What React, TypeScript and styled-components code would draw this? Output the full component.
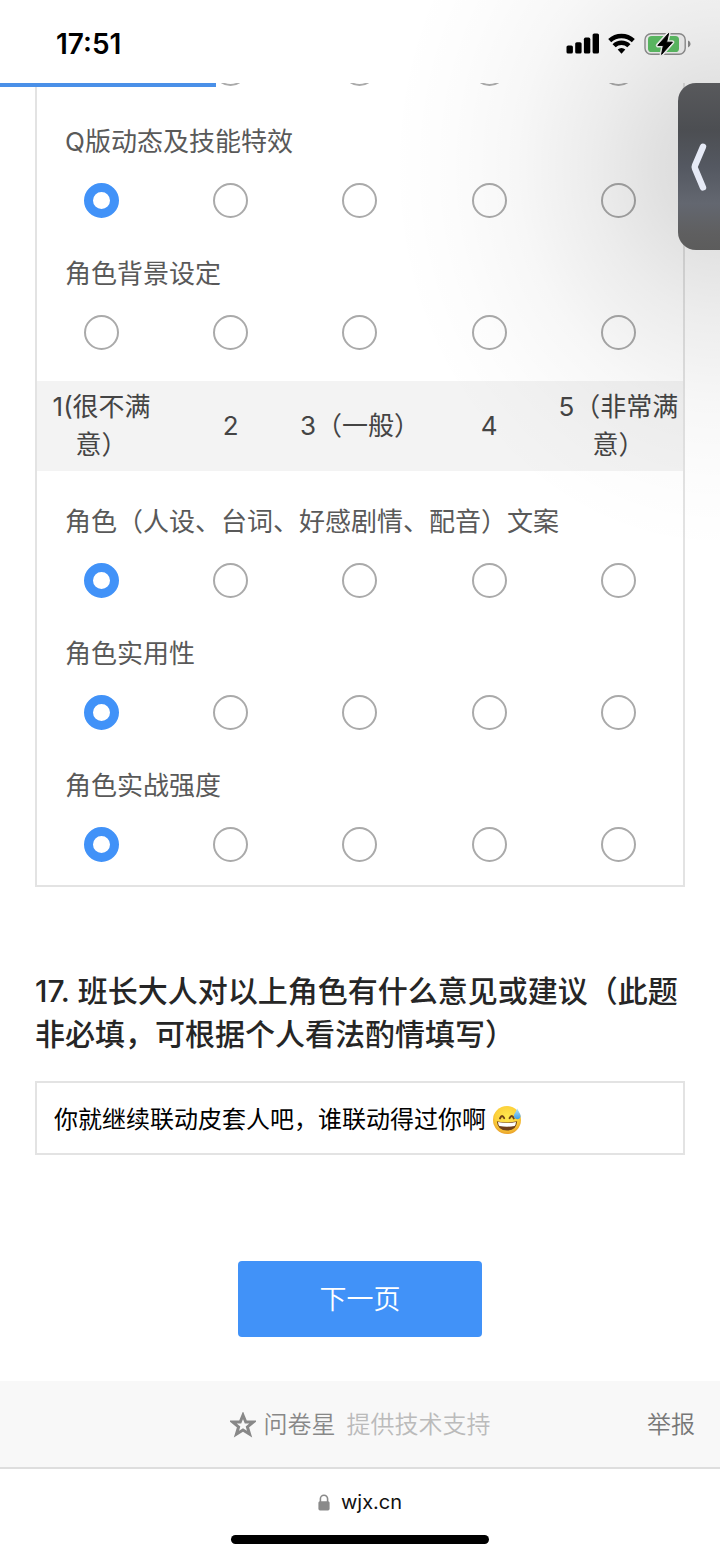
import React, { useState } from 'react';
import styled, { createGlobalStyle } from 'styled-components';

const GlobalStyle = createGlobalStyle`
  *, *::before, *::after { box-sizing: border-box; }
  body {
    margin: 0;
    background: #fff;
    color: #595959;
    font-family: Inter, "Noto Sans CJK SC", sans-serif;
    font-size: 26px;
    line-height: 38px;
  }
`;

const Screen = styled.div`
  position: relative;
  display: flex;
  flex-direction: column;
  min-height: 100vh;
  overflow: hidden;
`;

const StatusBar = styled.header`
  display: flex;
  align-items: center;
  justify-content: space-between;
  height: 83px;
  padding: 4px 29px 0 56px;
`;

const Clock = styled.time`
  color: #000;
  font-size: 28px;
  font-weight: 600;
`;

const StatusIcons = styled.div`
  display: flex;
  align-items: center;
  gap: 9px;
`;

const Survey = styled.main`
  position: relative;
  flex: 1;
  padding: 0 35px 44px;
`;

const Progress = styled.div<{ $percent: number }>`
  position: absolute;
  top: 0;
  left: 0;
  width: ${(p) => p.$percent}%;
  height: 4px;
  background: #4a90e8;
`;

const Matrix = styled.section`
  border: 2px solid #e3e3e3;
  border-top: 0;
`;

const RowGroup = styled.div<{ $first?: boolean; $last?: boolean }>`
  display: flex;
  flex-direction: column;
  gap: 36px;
  padding: ${(p) => (p.$first ? 0 : 31)}px 0 ${(p) => (p.$last ? 23 : 31)}px;
`;

const Row = styled.div`
  display: flex;
  flex-direction: column;
  gap: 21px;
`;

const RowLabel = styled.div`
  padding: 0 28px;
  line-height: 40px;
`;

const Columns = styled.div`
  display: grid;
  grid-template-columns: repeat(5, 1fr);
  justify-items: center;
`;

const ScrolledRow = styled(Columns)`
  height: 3px;
  align-content: end;
  overflow: hidden;
`;

const ScaleHeader = styled(Columns)`
  align-items: center;
  padding: 7px 0;
  background: #f3f3f3;
  color: #444;
  text-align: center;
`;

const Radio = styled.input`
  appearance: none;
  width: 35px;
  height: 35px;
  margin: 0;
  border: 2px solid #aaa;
  border-radius: 50%;

  &:checked {
    border: 9px solid #4192f8;
  }
`;

const Question = styled.label`
  display: block;
  margin: 83px 0 25px;
  color: #262626;
  font-size: 30px;
  font-weight: 500;
  line-height: 43px;
`;

const AnswerBox = styled.div`
  display: flex;
  align-items: center;
  gap: 4px;
  height: 74px;
  padding: 4px 17px 0;
  border: 2px solid #e3e3e3;
`;

const AnswerInput = styled.input`
  width: 434px;
  padding: 0;
  border: 0;
  outline: 0;
  background: transparent;
  color: #000;
  font-family: inherit;
  font-size: 24px;
  line-height: 38px;
`;

const NextButton = styled.button`
  display: block;
  width: 244px;
  height: 76px;
  margin: 106px auto 0;
  padding: 0 0 4px;
  border: 0;
  border-radius: 4px;
  background: #4192f8;
  color: #fff;
  font-family: inherit;
  font-size: 27px;
  font-weight: 350;
`;

const Footer = styled.footer`
  display: grid;
  grid-template-columns: 1fr auto 1fr;
  align-items: center;
  height: 88px;
  padding: 2px 25px 0;
  border-bottom: 2px solid #dedede;
  background: #f8f8f8;
  font-size: 24px;
  font-weight: 350;
`;

const Support = styled.div`
  display: flex;
  grid-column: 2;
  align-items: center;
  gap: 11px;
  color: #bbb;
`;

const Brand = styled.a`
  display: flex;
  align-items: center;
  gap: 8px;
  color: #888;
  text-decoration: none;
`;

const Report = styled.a`
  justify-self: end;
  color: #777;
  text-decoration: none;
`;

const AddressBar = styled.div`
  display: flex;
  flex-direction: column;
  align-items: center;
  gap: 14px;
  height: 89px;
  padding-top: 14px;
`;

const Address = styled.div`
  display: flex;
  align-items: center;
  gap: 11px;
  color: #111;
  font-size: 20px;
`;

const HomeIndicator = styled.div`
  width: 258px;
  height: 9px;
  border-radius: 5px;
  background: #000;
`;

const Shade = styled.div`
  position: absolute;
  top: 0;
  right: 0;
  width: 340px;
  height: 560px;
  background: radial-gradient(
    330px 385px at 100% 167px,
    rgba(0, 0, 0, 0.15) 0%,
    rgba(0, 0, 0, 0.12) 18%,
    rgba(0, 0, 0, 0.075) 38%,
    rgba(0, 0, 0, 0.03) 62%,
    rgba(0, 0, 0, 0.01) 82%,
    rgba(0, 0, 0, 0) 100%
  );
  pointer-events: none;
`;

const SideTab = styled.button`
  position: absolute;
  top: 83px;
  right: 0;
  display: flex;
  align-items: center;
  width: 42px;
  height: 167px;
  padding: 0 0 0 12px;
  border: 0;
  border-radius: 18px 0 0 18px;
  background: linear-gradient(#58595c 0%, #4c4e52 28%, #545861 50%, #636770 72%, #5f5f60 90%, #5c5c5c 100%);
`;

const SignalIcon = () => (
  <svg width="33" height="21" viewBox="0 0 33 21" aria-hidden="true">
    <rect x="0.5" y="12.5" width="6.4" height="8" rx="1.6" />
    <rect x="9.2" y="9.2" width="6.4" height="11.3" rx="1.6" />
    <rect x="17.9" y="4.6" width="6.4" height="15.9" rx="1.6" />
    <rect x="26.6" y="0.5" width="6.4" height="20" rx="1.6" />
  </svg>
);

const WifiIcon = () => (
  <svg width="27" height="21" viewBox="0 0 27 21" aria-hidden="true">
    <g fill="none" stroke="#000" strokeWidth="4.4">
      <path d="M1.7 7.6A17.4 17.4 0 0 1 25.3 7.6" />
      <path d="M6.1 12.8A10.4 10.4 0 0 1 20.9 12.8" />
    </g>
    <path d="M9.7 16.6A5.2 5.2 0 0 1 17.3 16.6L13.5 20.8Z" />
  </svg>
);

const BatteryIcon = () => (
  <svg width="47" height="26" viewBox="0 0 47 26" aria-hidden="true">
    <rect x="1" y="2.7" width="40.2" height="20.6" rx="6" fill="#f7f7f7" stroke="#929292" strokeWidth="1.4" />
    <rect x="4" y="5" width="31" height="16" rx="3.6" fill="#5fc267" />
    <path d="M44 9.6Q46.6 10.6 46.6 13T44 16.4Z" fill="#8c8c8c" />
    <path
      d="M24.6 2.4L13.8 14.4H19.4L17.6 23.4L28.4 11.2H22.6Z"
      stroke="#f7f7f7"
      strokeWidth="4"
      strokeLinejoin="round"
    />
    <path d="M24.6 2.4L13.8 14.4H19.4L17.6 23.4L28.4 11.2H22.6Z" stroke="#000" strokeLinejoin="round" />
  </svg>
);

const ChevronIcon = () => (
  <svg width="18" height="50" viewBox="0 0 18 50" aria-hidden="true">
    <path
      d="M13 4.8L5 23.6Q4.4 25 5 26.4L13 45.4"
      fill="none"
      stroke="#e6eaf6"
      strokeWidth="6.4"
      strokeLinecap="round"
      strokeLinejoin="round"
    />
  </svg>
);

const StarIcon = () => (
  <svg width="26" height="26" viewBox="0 0 26 26" aria-hidden="true">
    <path
      d="M13 3.2L15.8 10.1H23.2L17.4 14.9L19.6 22.2L13 18.1L6.4 22.2L8.6 14.9L2.8 10.1H10.2Z"
      fill="none"
      stroke="#888"
      strokeWidth="3"
    />
  </svg>
);

const LockIcon = () => (
  <svg width="12" height="17" viewBox="0 0 12 17" aria-hidden="true">
    <path d="M2.4 8V4.8A3.6 3.6 0 0 1 9.6 4.8V8" fill="none" stroke="#8a8a8a" strokeWidth="1.6" />
    <rect x="0.4" y="7.2" width="11.2" height="9.2" rx="1.6" fill="#8a8a8a" />
  </svg>
);

const SweatSmile = () => (
  <svg width="30" height="30" viewBox="0 0 30 30" role="img" aria-label="😅">
    <defs>
      <radialGradient id="face" cx="50%" cy="40%" r="60%">
        <stop offset="0" stopColor="#ffe94f" />
        <stop offset="0.7" stopColor="#fcd03a" />
        <stop offset="1" stopColor="#e9a02b" />
      </radialGradient>
      <linearGradient id="drop" x1="0" y1="0" x2="0" y2="1">
        <stop offset="0" stopColor="#b5e3fb" />
        <stop offset="1" stopColor="#3f9fe6" />
      </linearGradient>
    </defs>
    <circle cx="15" cy="15" r="14" fill="url(#face)" />
    <path d="M4.8 16.2Q15 18.6 25.2 16.2Q24.4 25.6 15 25.6T4.8 16.2Z" fill="#70401a" />
    <path d="M6 17Q15 19.2 24 17Q23.6 20.6 22.6 21Q15 22.4 7.4 21Q6.4 20.4 6 17Z" fill="#fff" />
    <g fill="none" stroke="#704216" strokeWidth="1.9" strokeLinecap="round">
      <path d="M8 13.4Q10 8.6 12.2 13.2" />
      <path d="M17.6 13.2Q19.8 8.6 21.8 13.4" />
    </g>
    <path d="M25.2 3.6Q27 7 28.4 9.8Q29.4 13.8 25.4 14.2Q21.2 13.8 22 9.8Q23.8 7 25.2 3.6Z" fill="url(#drop)" />
  </svg>
);

const scale = ['1(很不满意）', '2', '3（一般）', '4', '5（非常满意）'];

type RatingProps = { name: string; initial?: number };

function Ratings({ name, initial }: RatingProps) {
  const [value, setValue] = useState(initial);
  return (
    <>
      {scale.map((option, i) => (
        <Radio
          key={option}
          type="radio"
          name={name}
          aria-label={option}
          checked={value === i}
          onChange={() => setValue(i)}
        />
      ))}
    </>
  );
}

function RatingRow({ label, name, initial }: RatingProps & { label: string }) {
  return (
    <Row role="radiogroup" aria-labelledby={`${name}-label`}>
      <RowLabel id={`${name}-label`}>{label}</RowLabel>
      <Columns>
        <Ratings name={name} initial={initial} />
      </Columns>
    </Row>
  );
}

export default function App() {
  const [answer, setAnswer] = useState('你就继续联动皮套人吧，谁联动得过你啊');

  return (
    <>
      <GlobalStyle />
      <Screen lang="zh-CN">
        <StatusBar>
          <Clock>17:51</Clock>
          <StatusIcons>
            <SignalIcon />
            <WifiIcon />
            <BatteryIcon />
          </StatusIcons>
        </StatusBar>

        <Survey>
          <Matrix>
            <RowGroup $first>
              <ScrolledRow>
                <Ratings name="previous" />
              </ScrolledRow>
              <RatingRow name="effects" label="Q版动态及技能特效" initial={0} />
              <RatingRow name="background" label="角色背景设定" />
            </RowGroup>
            <ScaleHeader>
              {scale.map((option) => (
                <span key={option}>{option}</span>
              ))}
            </ScaleHeader>
            <RowGroup $last>
              <RatingRow name="writing" label="角色（人设、台词、好感剧情、配音）文案" initial={0} />
              <RatingRow name="utility" label="角色实用性" initial={0} />
              <RatingRow name="strength" label="角色实战强度" initial={0} />
            </RowGroup>
          </Matrix>

          <Question htmlFor="answer">
            17. 班长大人对以上角色有什么意见或建议（此题非必填，可根据个人看法酌情填写）
          </Question>
          <AnswerBox>
            <AnswerInput id="answer" value={answer} onChange={(e) => setAnswer(e.target.value)} />
            <SweatSmile />
          </AnswerBox>

          <NextButton type="button">下一页</NextButton>
          <Progress $percent={30} />
        </Survey>

        <Footer>
          <Support>
            <Brand href="#">
              <StarIcon />
              问卷星
            </Brand>
            提供技术支持
          </Support>
          <Report href="#">举报</Report>
        </Footer>

        <AddressBar>
          <Address>
            <LockIcon />
            wjx.cn
          </Address>
          <HomeIndicator />
        </AddressBar>

        <Shade />
        <SideTab type="button" aria-label="‹">
          <ChevronIcon />
        </SideTab>
      </Screen>
    </>
  );
}
